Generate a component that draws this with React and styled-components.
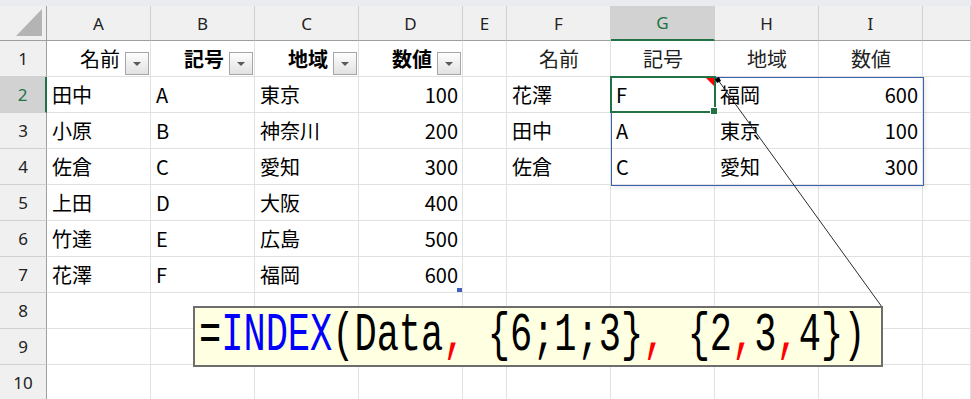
import React from 'react';
import styled, { createGlobalStyle } from 'styled-components';

const Global = createGlobalStyle`
  html, body { margin: 0; padding: 0; background: #ffffff; }
  body { font-family: "Noto Sans CJK JP", "Noto Sans", sans-serif; }
`;

const COLS = ['A', 'B', 'C', 'D', 'E', 'F', 'G', 'H', 'I', ''];

const ROWS = [
  [
    { t: '名前', a: 'right', f: true },
    { t: '記号', a: 'right', f: true, b: true },
    { t: '地域', a: 'right', f: true, b: true },
    { t: '数値', a: 'right', f: true, b: true },
    {},
    { t: '名前', a: 'center', s: true },
    { t: '記号', a: 'center', s: true },
    { t: '地域', a: 'center', s: true },
    { t: '数値', a: 'center', s: true },
  ],
  [{ t: '田中' }, { t: 'A' }, { t: '東京' }, { t: '100', a: 'right' }, {}, { t: '花澤' }, { t: 'F', active: true }, { t: '福岡' }, { t: '600', a: 'right' }],
  [{ t: '小原' }, { t: 'B' }, { t: '神奈川' }, { t: '200', a: 'right' }, {}, { t: '田中' }, { t: 'A' }, { t: '東京' }, { t: '100', a: 'right' }],
  [{ t: '佐倉' }, { t: 'C' }, { t: '愛知' }, { t: '300', a: 'right' }, {}, { t: '佐倉' }, { t: 'C' }, { t: '愛知' }, { t: '300', a: 'right' }],
  [{ t: '上田' }, { t: 'D' }, { t: '大阪' }, { t: '400', a: 'right' }],
  [{ t: '竹達' }, { t: 'E' }, { t: '広島' }, { t: '500', a: 'right' }],
  [{ t: '花澤' }, { t: 'F' }, { t: '福岡' }, { t: '600', a: 'right', tableEnd: true }],
  [],
  [],
  [],
];

const Sheet = styled.div`
  position: relative;
  width: 971px;
  height: 399px;
  overflow: hidden;
  background: #ffffff;
`;

const TopStrip = styled.div`
  height: 6px;
  background: #e9ebee;
`;

const Grid = styled.div`
  display: grid;
  grid-template-columns: 47px 104px 104px 104px 104px 44px 104px 104px 104px 104px 1fr;
  grid-template-rows: 35px repeat(10, 36px);
`;

const Corner = styled.div`
  box-sizing: border-box;
  background: #f0f0f0;
  border-right: 1px solid #9e9e9e;
  border-bottom: 1px solid #9e9e9e;
  display: flex;
  align-items: flex-end;
  justify-content: flex-end;
  padding: 0 4px 4px 0;
`;

const CornerTriangle = styled.div`
  width: 26px;
  height: 27px;
  background: #b4b4b4;
  clip-path: polygon(100% 0, 100% 100%, 0 100%);
`;

const ColHeader = styled.div`
  box-sizing: border-box;
  background: ${p => (p.$selected ? '#d2d2d2' : '#f0f0f0')};
  border-right: 1px solid #d0d0d0;
  border-bottom: ${p => (p.$selected ? '2px solid #217346' : '1px solid #9e9e9e')};
  display: flex;
  align-items: center;
  justify-content: center;
  font-family: "Noto Sans", "Liberation Sans", sans-serif;
  font-size: 17px;
  color: ${p => (p.$selected ? '#217346' : '#222222')};
`;

const RowHeader = styled.div`
  box-sizing: border-box;
  background: ${p => (p.$selected ? '#d2d2d2' : '#f0f0f0')};
  border-right: ${p => (p.$selected ? '2px solid #217346' : '1px solid #9e9e9e')};
  border-bottom: 1px solid #d0d0d0;
  display: flex;
  align-items: center;
  justify-content: center;
  font-family: "Noto Sans", "Liberation Sans", sans-serif;
  font-size: 17px;
  color: ${p => (p.$selected ? '#217346' : '#222222')};
`;

const Cell = styled.div`
  position: relative;
  box-sizing: border-box;
  border-right: 1px solid #e1e1e1;
  border-bottom: 1px solid #e1e1e1;
  display: flex;
  align-items: center;
  justify-content: ${p =>
    p.$align === 'right' ? 'flex-end' : p.$align === 'center' ? 'center' : 'flex-start'};
  padding: ${p => (p.$filter ? '0 1px 0 5px' : '0 4px 0 5px')};
  font-size: 20px;
  font-weight: ${p => (p.$bold ? 700 : 400)};
  color: ${p => (p.$soft ? '#222222' : '#000000')};
  white-space: nowrap;
`;

const FilterButton = styled.span`
  box-sizing: border-box;
  flex: none;
  width: 24px;
  height: 23px;
  margin-left: 5px;
  align-self: flex-end;
  margin-bottom: 1px;
  border: 1px solid #a6a6a6;
  background: linear-gradient(#fdfdfd, #e2e2e2);
  display: flex;
  align-items: center;
  justify-content: center;
  &::after {
    content: '';
    border-left: 4px solid transparent;
    border-right: 4px solid transparent;
    border-top: 4px solid #5a5a5a;
  }
`;

/* overlays drawn over the active cell G2 */
const ActiveFrame = styled.span`
  position: absolute;
  inset: -1px -2px -1px -1px;
  border: 2px solid #217346;
  pointer-events: none;
  z-index: 3;
`;

const FillHandle = styled.span`
  position: absolute;
  right: -3px;
  bottom: -2px;
  width: 6px;
  height: 6px;
  background: #217346;
  outline: 1px solid #ffffff;
  z-index: 4;
`;

const CommentMark = styled.span`
  position: absolute;
  right: 0;
  top: 1px;
  width: 8px;
  height: 8px;
  background: #ff0000;
  clip-path: polygon(0 0, 100% 0, 100% 100%);
  z-index: 4;
`;

/* the small blue handle at the end of the table */
const TableHandle = styled.span`
  position: absolute;
  right: 0;
  bottom: 0;
  width: 5px;
  height: 4px;
  background: #4060c0;
`;

/* blue border of the spilled result G2:I4 */
const SpillBorder = styled.div`
  position: absolute;
  left: 611px;
  top: 77px;
  width: 313px;
  height: 109px;
  box-sizing: border-box;
  border: 1px solid #3b62b0;
  box-shadow: 2px 2px 4px rgba(0, 0, 0, 0.08);
  pointer-events: none;
`;

const Connector = styled.svg`
  position: absolute;
  left: 0;
  top: 0;
  width: 971px;
  height: 399px;
  pointer-events: none;
  z-index: 5;
`;

const Callout = styled.div`
  position: absolute;
  left: 193px;
  top: 306px;
  width: 690px;
  height: 61px;
  box-sizing: border-box;
  border: 2px solid #6d6d6d;
  background: #ffffe1;
  display: flex;
  align-items: center;
  padding-left: 4px;
  overflow: hidden;
  z-index: 6;
`;

const Formula = styled.span`
  display: inline-block;
  font-family: "Liberation Mono", "DejaVu Sans Mono", monospace;
  font-size: 37px;
  line-height: 1;
  white-space: pre;
  color: #000000;
  transform: scaleY(1.45);
  transform-origin: center;
`;

const Fn = styled.span`
  color: #0000ff;
`;

const Sep = styled.span`
  color: #ff0000;
`;

export default function App() {
  return (
    <>
      <Global />
      <Sheet>
        <TopStrip />
        <Grid>
          <Corner>
            <CornerTriangle />
          </Corner>
          {COLS.map((c, i) => (
            <ColHeader key={'h' + i} $selected={c === 'G'}>
              {c}
            </ColHeader>
          ))}
          {ROWS.map((row, r) => (
            <React.Fragment key={'r' + r}>
              <RowHeader $selected={r === 1}>{r + 1}</RowHeader>
              {COLS.map((_, c) => {
                const d = row[c] || {};
                return (
                  <Cell
                    key={'c' + r + '-' + c}
                    $align={d.a}
                    $bold={d.b}
                    $filter={d.f}
                    $soft={d.s}
                  >
                    {d.t}
                    {d.f && <FilterButton />}
                    {d.tableEnd && <TableHandle />}
                    {d.active && (
                      <>
                        <ActiveFrame />
                        <CommentMark />
                        <FillHandle />
                      </>
                    )}
                  </Cell>
                );
              })}
            </React.Fragment>
          ))}
        </Grid>
        <SpillBorder />
        <Connector viewBox="0 0 971 399">
          <line x1="882" y1="307" x2="718" y2="80" stroke="#2b2b2b" strokeWidth="1" />
          <polygon points="715,79 719,77 721,81 717,83" fill="#000000" />
        </Connector>
        <Callout>
          <Formula>
            =<Fn>INDEX</Fn>(Data<Sep>,</Sep> {'{'}6;1;3{'}'}<Sep>,</Sep> {'{'}2<Sep>,</Sep>3<Sep>,</Sep>4{'}'})
          </Formula>
        </Callout>
      </Sheet>
    </>
  );
}
